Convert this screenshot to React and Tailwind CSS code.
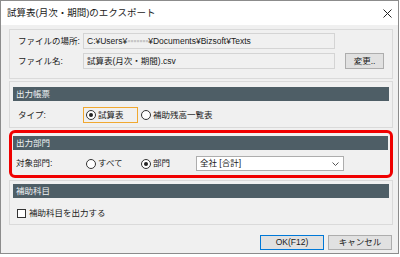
import React from "react";

function Radio({ checked }) {
  return (
    <span className="w-[10px] h-[10px] rounded-full border border-[#333] bg-white flex items-center justify-center shrink-0">
      {checked && <span className="w-[4px] h-[4px] rounded-full bg-[#222]" />}
    </span>
  );
}

function Header({ children }) {
  return (
    <div className="h-[14px] bg-[#4e5e66] text-[#eef2f3] text-[8.5px] leading-[14px] pl-[3px] whitespace-nowrap">
      {children}
    </div>
  );
}

export default function App() {
  return (
    <div className="w-[400px] h-[257px] bg-white overflow-hidden font-['Liberation_Sans','Noto_Sans_CJK_JP',sans-serif] text-[#1a1a1a] whitespace-nowrap">
      <div className="w-[399px] h-[254px] border border-[#8c8c8c] bg-[#f0f0f0] flex flex-col">
        {/* title bar */}
        <div className="h-[24px] bg-white flex items-center justify-between pl-[6px] pr-[5px] shrink-0">
          <span className="text-[9.5px] leading-none">試算表(月次・期間)のエクスポート</span>
          <svg width="9" height="9" viewBox="0 0 9 9" className="mr-[1px]">
            <path d="M0.5 0.5 L8.5 8.5 M8.5 0.5 L0.5 8.5" stroke="#222" strokeWidth="1" />
          </svg>
        </div>

        {/* group 1 */}
        <div className="ml-[8px] w-[384px] h-[50px] mt-[4px] border border-[#dadada] pt-[3px] pl-[8px] flex flex-col gap-[4px] text-[8.5px]">
          <div className="flex items-center h-[16px]">
            <span className="w-[65px] shrink-0">ファイルの場所:</span>
            <div className="w-[252px] h-[16px] border border-[#d4d4d4] bg-[#f0f0f0] pl-[3px] leading-[14px]">C:¥Users¥<span className="text-[#c4c4c4]">▪▪▪▪▪▪▪</span>¥Documents¥Bizsoft¥Texts</div>
          </div>
          <div className="flex items-center h-[16px]">
            <span className="w-[65px] shrink-0">ファイル名:</span>
            <div className="w-[252px] h-[16px] border border-[#d4d4d4] bg-[#f0f0f0] pl-[3px] leading-[14px]">試算表(月次・期間).csv</div>
            <div className="ml-[10px] w-[39px] h-[16px] border border-[#adadad] bg-[#e1e1e1] flex items-center justify-center leading-none">変更..</div>
          </div>
        </div>

        {/* group 2 */}
        <div className="ml-[8px] w-[384px] h-[47px] mt-[2px] border border-[#dadada] pt-[5px] px-[3px] flex flex-col">
          <Header>出力帳票</Header>
          <div className="flex items-center h-[16px] mt-[6px] text-[8.5px] pl-[5px]">
            <span className="w-[65px] shrink-0">タイプ:</span>
            <div className="w-[55px] h-[16px] border border-[#f0a830] flex items-center pl-[2px] gap-[2px]">
              <Radio checked />
              <span>試算表</span>
            </div>
            <div className="flex items-center ml-[3px] gap-[2px]">
              <Radio />
              <span>補助残高一覧表</span>
            </div>
          </div>
        </div>

        {/* red group */}
        <div className="ml-[8px] w-[384px] h-[48px] mt-[2px] border-[3px] border-[#f00000] rounded-[6px] pt-[3px] pl-[1px] pr-[2px] flex flex-col">
          <Header>出力部門</Header>
          <div className="flex items-center h-[15px] mt-[6px] text-[8.5px] pl-[3px]">
            <span className="w-[70px] shrink-0">対象部門:</span>
            <div className="flex items-center gap-[2px] w-[55px]">
              <Radio />
              <span>すべて</span>
            </div>
            <div className="flex items-center gap-[2px] w-[55px]">
              <Radio checked />
              <span>部門</span>
            </div>
            <div className="w-[148px] h-[15px] border border-[#adadad] bg-white flex items-center justify-between pl-[3px] pr-[4px]">
              <span>全社 [合計]</span>
              <svg width="7" height="4" viewBox="0 0 7 4">
                <path d="M0.5 0.5 L3.5 3.5 L6.5 0.5" stroke="#555" strokeWidth="1" fill="none" />
              </svg>
            </div>
          </div>
        </div>

        {/* group 3 */}
        <div className="ml-[8px] w-[384px] h-[45px] mt-[2px] border border-[#dadada] pt-[3px] px-[3px] flex flex-col">
          <Header>補助科目</Header>
          <div className="flex items-center mt-[9px] text-[8.5px] pl-[4px] gap-[3px]">
            <span className="w-[9px] h-[9px] border border-[#333] bg-white" />
            <span>補助科目を出力する</span>
          </div>
        </div>

        {/* buttons */}
        <div className="flex justify-end gap-[4px] mt-[10px] pr-[6px] text-[8.5px]">
          <div className="w-[64px] h-[15px] border border-[#0078d7] bg-[#e1e1e1] flex items-center justify-center leading-none">OK(F12)</div>
          <div className="w-[64px] h-[15px] border border-[#adadad] bg-[#e1e1e1] flex items-center justify-center leading-none">キャンセル</div>
        </div>
      </div>
    </div>
  );
}
